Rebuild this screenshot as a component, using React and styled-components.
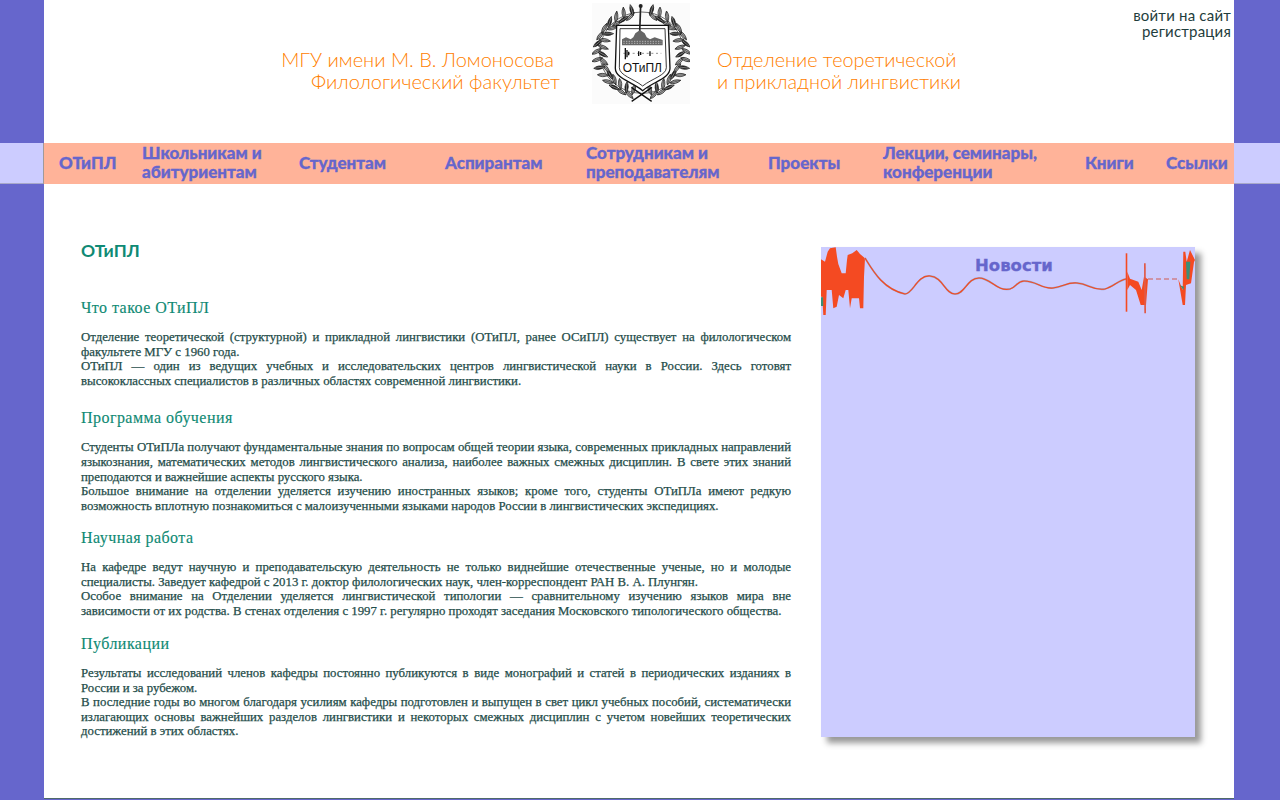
import React from 'react'
import styled, { createGlobalStyle } from 'styled-components'

const GlobalStyle = createGlobalStyle`
    html, body {
        margin: 0;
        padding: 0;
        background: #6666cc;
    }
    #root {
        height: 800px;
        overflow: hidden;
    }
`;

const TopBar = styled.header`
    margin: 0 46px 0 44px;
    height: 143px;
    background: #fff;
    display: flex;
    align-items: flex-start;
    font-family: Lato, "Liberation Sans", sans-serif;
`;

const TitleLeft = styled.div`
    width: 516px;
    margin-top: 48px;
    text-align: right;
    color: #ff8000;
    font-size: 20px;
    font-weight: 300;
    line-height: 22px;
`;

const FirstLine = styled.div`
    padding-right: 6px;
`;

const Crest = styled.svg`
    width: 98px;
    height: 101px;
    margin: 3px 27px 0 32px;
    background: #fbfbfb;
    flex: none;
`;

const TitleRight = styled.div`
    margin-top: 48px;
    color: #ff8000;
    font-size: 19.8px;
    font-weight: 300;
    line-height: 22px;
`;

const LoginLinks = styled.div`
    margin: 7px 3px 0 auto;
    text-align: right;
    color: #1f3d3d;
    font-size: 15px;
    letter-spacing: 0.2px;
    line-height: 16px;
`;

const NavBand = styled.div`
    background: #ccccff;
    border-bottom: 1px solid #a8a8c8;
    height: 40px;
    padding: 0 46px 0 43px;
`;

const Nav = styled.nav`
    height: 41px;
    box-sizing: border-box;
    padding: 0 0 4px 15px;
    background: #ffb399;
    border-left: 1px solid #a09a9a;
    display: grid;
    grid-template-columns: 83px 157px 146px 141px 182px 115px 202px 81px 1fr;
    align-items: center;
    font-family: Lato, "Liberation Sans", sans-serif;
    font-weight: 900;
    font-size: 17px;
    -webkit-text-stroke: 0.3px #6666cc;
    line-height: 19px;
    color: #6666cc;
`;

const NavItem = styled.a`
    display: block;
`;

const Main = styled.main`
    margin: 0 46px 0 44px;
    height: 615px;
    background: #fff;
    border-bottom: 1px solid #4f6a6a;
    box-sizing: border-box;
    padding: 56px 39px 0 37px;
    display: flex;
    align-items: flex-start;
    gap: 30px;
`;

const Article = styled.article`
    width: 710px;
    flex: none;
    font-family: "Liberation Serif", serif;
`;

const PageTitle = styled.h1`
    margin: 0 0 37px;
    font-family: Lato, "Liberation Sans", sans-serif;
    font-size: 17.5px;
    font-weight: 700;
    line-height: 22px;
    color: #0f8a74;
`;

const SectionTitle = styled.h2`
    margin: 0;
    font-size: 16px;
    font-weight: 400;
    -webkit-text-stroke: 0.15px #0f8a74;
    line-height: 18px;
    color: #0f8a74;
    letter-spacing: 0.45px;
`;

const Text = styled.p`
    margin: 13px 0 ${p => p.$below}px;
    font-size: 12.8px;
    font-weight: 400;
    -webkit-text-stroke: 0.25px #1f4d4a;
    line-height: 14.6px;
    text-align: justify;
    color: #1f4d4a;
`;

const NewsPanel = styled.aside`
    position: relative;
    width: 374px;
    height: 490px;
    margin-top: 7px;
    flex: none;
    background: #ccccff;
    box-shadow: 6px 6px 6px #999;
`;

const Wave = styled.svg`
    display: block;
    width: 375px;
    height: 72px;
`;

const NewsTitle = styled.div`
    position: absolute;
    top: 9px;
    left: 154px;
    font-family: "DejaVu Sans", sans-serif;
    font-weight: 700;
    font-size: 16.5px;
    -webkit-text-stroke: 0.3px #6666cc;
    line-height: 20px;
    color: #6666cc;
`;

// the points below were read off the picture at 3x, hence the scale
const toLocal = (points, dx) =>
    'M' + points.map(([x, y]) => `${(x / 3 + dx).toFixed(1)} ${(y / 3 - 7).toFixed(1)}`).join(' L') + ' Z';

const burst = toLocal([
    [18, 58], [30, 65], [38, 35], [45, 25], [62, 22], [66, 50], [70, 72], [80, 100], [92, 100], [96, 60], [98, 45],
    [112, 40], [125, 30], [135, 42], [150, 55], [147, 110], [145, 205], [135, 205], [132, 175], [110, 175],
    [105, 205], [100, 150], [92, 150], [85, 175], [72, 165], [65, 200], [55, 205], [50, 150], [35, 150],
    [32, 225], [25, 225], [22, 170], [18, 170],
], -6);
const burstGreen = toLocal([[18, 172], [24, 172], [25, 198], [18, 198]], -6);

const leftSpike = toLocal([[347, 40], [352, 40], [352, 215], [347, 215]], 189);
const wedge = toLocal([
    [352, 95], [360, 116], [385, 125], [395, 150], [402, 110], [414, 118], [408, 195], [392, 195],
    [378, 150], [360, 135], [352, 150],
], 189);
const midSpike = toLocal([[402, 70], [407, 70], [408, 220], [403, 220]], 189);
const rightBurst = toLocal([
    [505, 118], [518, 150], [520, 35], [526, 35], [530, 65], [540, 30], [555, 60], [552, 66], [543, 130],
    [528, 135], [525, 195], [518, 195], [508, 135],
], 189);
const rightGreenA = toLocal([[528, 65], [541, 65], [538, 118], [530, 118]], 189);
const rightGreenB = toLocal([[510, 136], [522, 140], [520, 150]], 189);

const curve = 'M44 11 C52 24 62 42 84 47 C92 47 96 28 109 29 C122 30 124 47 134 47 C144 47 146 31 158 31 C170 31 176 45 189 42 C196 40 196 34 203 34 C216 34 220 42 232 41 C242 40 246 35 256 36 C268 37 272 44 284 42 C292 40 298 33 305 32';

const Waveform = () => (
    <Wave viewBox="0 0 375 72">
        <path d={burst} fill="#f44a22" />
        <path d={burstGreen} fill="#3a8f78" />
        <path d={curve} fill="none" stroke="#a0a4c4" strokeWidth="1.8" />
        <path d={curve} fill="none" stroke="#f44a22" strokeWidth="1.2" />
        <path d={leftSpike} fill="#f44a22" />
        <path d={wedge} fill="#f44a22" />
        <path d={midSpike} fill="#e05a48" />
        <path d="M327 32 L357 32" stroke="#d05a50" strokeWidth="1" strokeDasharray="5 3" fill="none" />
        <path d={rightBurst} fill="#f44a22" />
        <path d={rightGreenA} fill="#3a8f78" />
        <path d={rightGreenB} fill="#3a8f78" />
    </Wave>
);

// two rows of leaves going up either side of the crest from the crossed stems
const leaves = [];
for (let step = 0; step < 15; step++) {
    for (const side of [-1, 1]) {
        for (const row of [-1, 1]) {
            const deg = step * 10.8 + 12 + (row > 0 ? 4 : 0);
            const a = deg * Math.PI / 180;
            leaves.push({
                x: 155 + side * Math.sin(a) * (126 + row * 9),
                y: 158 + Math.cos(a) * (122 + row * 9),
                rot: side * (90 - deg) * -1 + side * row * 28,
                dark: (step + row) % 3 === 0,
            });
        }
    }
}

const CrestLogo = () => (
    <Crest viewBox="6 9 294 303">
        <ellipse cx="155" cy="158" rx="126" ry="122" fill="none" stroke="#222" strokeWidth="2" strokeDasharray="620 160" strokeDashoffset="-120" />
        {leaves.map((l, i) => (
            <g key={i} transform={`translate(${l.x.toFixed(1)} ${l.y.toFixed(1)}) rotate(${l.rot.toFixed(0)})`}>
                <path d="M-17 0 Q-2 -10 17 0 Q-2 10 -17 0 Z" fill={l.dark ? '#222' : '#aaa'} stroke="#111" strokeWidth="2" />
                <path d="M-14 0 L14 0" stroke={l.dark ? '#ccc' : '#111'} strokeWidth="1.4" />
            </g>
        ))}
        <path d="M125 304 L186 262 M185 304 L124 262" stroke="#111" strokeWidth="4" />
        <path d="M80 76 L235 76 L240 205 C240 235 190 245 158 272 C125 245 76 235 76 205 Z" fill="#fff" stroke="#111" strokeWidth="4" />
        <path d="M90 86 L225 86 L229 203 C229 226 185 236 158 258 C130 236 88 226 88 203 Z" fill="none" stroke="#111" strokeWidth="2.5" />
        <path d="M152 16 L149 96" stroke="#222" strokeWidth="5" />
        <circle cx="152" cy="18" r="6" fill="#222" />
        <path d="M96 136 L96 118 L108 112 L122 118 L130 112 L136 100 L150 90 L164 100 L170 112 L180 118 L194 112 L218 120 L218 136 Z" fill="#666" />
        <path d="M100 124 L214 124 M100 130 L214 130" stroke="#ddd" strokeWidth="2" strokeDasharray="4 4" />
        <path d="M100 160 L214 160" stroke="#222" strokeWidth="1.5" strokeDasharray="6 8" />
        <path d="M106 144 L106 178 M111 150 L111 172 M116 155 L116 166 M146 154 L146 168 M152 156 L152 165 M180 154 L180 168" stroke="#111" strokeWidth="4" />
        <text x="157" y="216" textAnchor="middle" fontFamily="'Liberation Sans', sans-serif" fontSize="36" fill="#111">ОТиПЛ</text>
    </Crest>
);

const menu = [
    ['ОТиПЛ'],
    ['Школьникам и', 'абитуриентам'],
    ['Студентам'],
    ['Аспирантам'],
    ['Сотрудникам и', 'преподавателям'],
    ['Проекты'],
    ['Лекции, семинары,', 'конференции'],
    ['Книги'],
    ['Ссылки'],
];

export default function App() {
    return (
        <>
            <GlobalStyle />
            <TopBar>
                <TitleLeft>
                    <FirstLine>МГУ имени М. В. Ломоносова</FirstLine>
                    <div>Филологический факультет</div>
                </TitleLeft>
                <CrestLogo />
                <TitleRight>
                    <div>Отделение теоретической</div>
                    <div>и прикладной лингвистики</div>
                </TitleRight>
                <LoginLinks>
                    <div>войти на сайт</div>
                    <div>регистрация</div>
                </LoginLinks>
            </TopBar>
            <NavBand>
                <Nav>
                    {menu.map(lines => (
                        <NavItem key={lines[0]}>
                            {lines.map(line => <div key={line}>{line}</div>)}
                        </NavItem>
                    ))}
                </Nav>
            </NavBand>
            <Main>
                <Article>
                    <PageTitle>ОТиПЛ</PageTitle>
                    <SectionTitle>Что такое ОТиПЛ</SectionTitle>
                    <Text $below={21}>
                        Отделение теоретической (структурной) и прикладной лингвистики (ОТиПЛ, ранее ОСиПЛ) существует на филологическом факультете МГУ с 1960 года.<br />
                        ОТиПЛ — один из ведущих учебных и исследовательских центров лингвистической науки в России. Здесь готовят высококлассных специалистов в различных областях современной лингвистики.
                    </Text>
                    <SectionTitle>Программа обучения</SectionTitle>
                    <Text $below={15.6}>
                        Студенты ОТиПЛа получают фундаментальные знания по вопросам общей теории языка, современных прикладных направлений языкознания, математических методов лингвистического анализа, наиболее важных смежных дисциплин. В свете этих знаний преподаются и важнейшие аспекты русского языка.<br />
                        Большое внимание на отделении уделяется изучению иностранных языков; кроме того, студенты ОТиПЛа имеют редкую возможность вплотную познакомиться с малоизученными языками народов России в лингвистических экспедициях.
                    </Text>
                    <SectionTitle>Научная работа</SectionTitle>
                    <Text $below={16.6}>
                        На кафедре ведут научную и преподавательскую деятельность не только виднейшие отечественные ученые, но и молодые специалисты. Заведует кафедрой с 2013 г. доктор филологических наук, член-корреспондент РАН В. А. Плунгян.<br />
                        Особое внимание на Отделении уделяется лингвистической типологии — сравнительному изучению языков мира вне зависимости от их родства. В стенах отделения с 1997 г. регулярно проходят заседания Московского типологического общества.
                    </Text>
                    <SectionTitle>Публикации</SectionTitle>
                    <Text $below={0}>
                        Результаты исследований членов кафедры постоянно публикуются в виде монографий и статей в периодических изданиях в России и за рубежом.<br />
                        В последние годы во многом благодаря усилиям кафедры подготовлен и выпущен в свет цикл учебных пособий, систематически излагающих основы важнейших разделов лингвистики и некоторых смежных дисциплин с учетом новейших теоретических достижений в этих областях.
                    </Text>
                </Article>
                <NewsPanel>
                    <Waveform />
                    <NewsTitle>Новости</NewsTitle>
                </NewsPanel>
            </Main>
        </>
    );
}
